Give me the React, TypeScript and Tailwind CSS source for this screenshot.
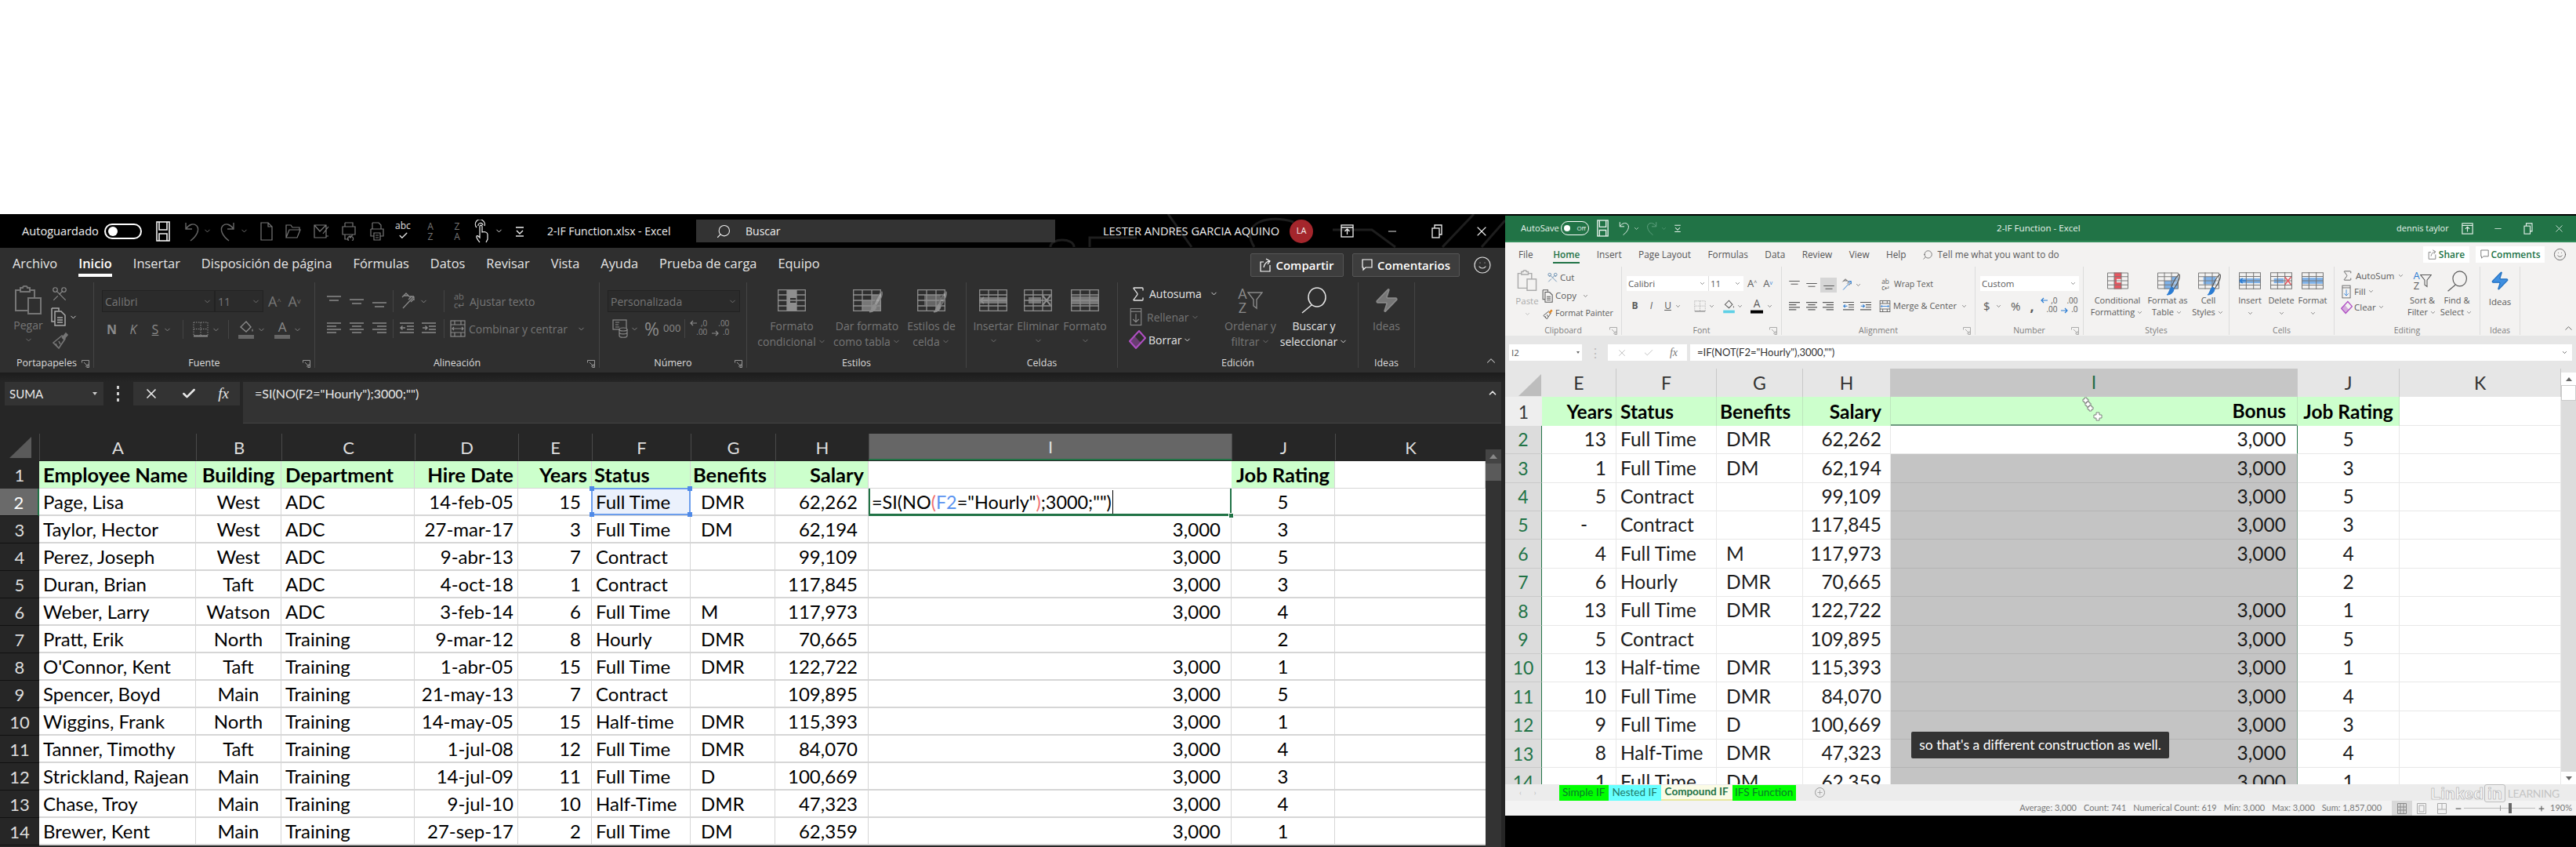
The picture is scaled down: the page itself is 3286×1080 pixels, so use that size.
import React from "react";
import { ChevronDown, ChevronUp, Scissors, Search, Smile, Sigma, Zap, X, Check, Minus, Plus } from "lucide-react";

type P = { className?: string };

const leftRows = [
  ["Page, Lisa", "West", "ADC", "14-feb-05", "15", "Full Time", "DMR", "62,262", "", "5"],
  ["Taylor, Hector", "West", "ADC", "27-mar-17", "3", "Full Time", "DM", "62,194", "3,000", "3"],
  ["Perez, Joseph", "West", "ADC", "9-abr-13", "7", "Contract", "", "99,109", "3,000", "5"],
  ["Duran, Brian", "Taft", "ADC", "4-oct-18", "1", "Contract", "", "117,845", "3,000", "3"],
  ["Weber, Larry", "Watson", "ADC", "3-feb-14", "6", "Full Time", "M", "117,973", "3,000", "4"],
  ["Pratt, Erik", "North", "Training", "9-mar-12", "8", "Hourly", "DMR", "70,665", "", "2"],
  ["O'Connor, Kent", "Taft", "Training", "1-abr-05", "15", "Full Time", "DMR", "122,722", "3,000", "1"],
  ["Spencer, Boyd", "Main", "Training", "21-may-13", "7", "Contract", "", "109,895", "3,000", "5"],
  ["Wiggins, Frank", "North", "Training", "14-may-05", "15", "Half-time", "DMR", "115,393", "3,000", "1"],
  ["Tanner, Timothy", "Taft", "Training", "1-jul-08", "12", "Full Time", "DMR", "84,070", "3,000", "4"],
  ["Strickland, Rajean", "Main", "Training", "14-jul-09", "11", "Full Time", "D", "100,669", "3,000", "3"],
  ["Chase, Troy", "Main", "Training", "9-jul-10", "10", "Half-Time", "DMR", "47,323", "3,000", "4"],
  ["Brewer, Kent", "Main", "Training", "27-sep-17", "2", "Full Time", "DM", "62,359", "3,000", "1"],
];

const rightRows = [
  ["13", "Full Time", "DMR", "62,262", "3,000", "5"],
  ["1", "Full Time", "DM", "62,194", "3,000", "3"],
  ["5", "Contract", "", "99,109", "3,000", "5"],
  ["-", "Contract", "", "117,845", "3,000", "3"],
  ["4", "Full Time", "M", "117,973", "3,000", "4"],
  ["6", "Hourly", "DMR", "70,665", "", "2"],
  ["13", "Full Time", "DMR", "122,722", "3,000", "1"],
  ["5", "Contract", "", "109,895", "3,000", "5"],
  ["13", "Half-time", "DMR", "115,393", "3,000", "1"],
  ["10", "Full Time", "DMR", "84,070", "3,000", "4"],
  ["9", "Full Time", "D", "100,669", "3,000", "3"],
  ["8", "Half-Time", "DMR", "47,323", "3,000", "4"],
  ["1", "Full Time", "DM", "62,359", "3,000", "1"],
];

// small drawn icons -----------------------------------------------------------

function VAlign({ pos, className }: P & { pos: number }) {
  const y = [2, 6, 10][pos];
  return (
    <svg width="18" height="16" viewBox="0 0 18 16" className={className} stroke="currentColor" strokeWidth="1.6">
      <path d={`M0 ${y}H18M3 ${y + 5}H15`} />
    </svg>
  );
}

function HAlign({ a, className }: P & { a: "l" | "c" | "r" }) {
  const short = a === "l" ? "M0 6H12M0 14H12" : a === "c" ? "M3 6H15M3 14H15" : "M6 6H18M6 14H18";
  return (
    <svg width="18" height="18" viewBox="0 0 18 18" className={className} stroke="currentColor" strokeWidth="1.6">
      <path d={`M0 2H18M0 10H18${short}`} />
    </svg>
  );
}

function Indent({ out, className, accent = "currentColor" }: P & { out?: boolean; accent?: string }) {
  return (
    <svg width="18" height="18" viewBox="0 0 18 18" className={className} stroke="currentColor" strokeWidth="1.4" fill="none">
      <path d="M0 2H18M9 6H18M9 10H18M0 14H18" />
      <path d={out ? "M7 8H1M3.5 5.5L1 8L3.5 10.5" : "M1 8H7M4.5 5.5L7 8L4.5 10.5"} stroke={accent} />
    </svg>
  );
}

function Orient({ className, accent = "currentColor" }: P & { accent?: string }) {
  return (
    <svg width="22" height="24" viewBox="0 0 22 24" className={className} stroke="currentColor" strokeWidth="1.3" fill="none">
      <path d="M2 7L7 2L12 7M4 5L10 5" />
      <path d="M10 10L14 6M13 13L17 9" />
      <path d="M3 21L17 6M17 6H12M17 6V11" stroke={accent} />
    </svg>
  );
}

function PasteIco({ className }: P) {
  return (
    <svg width="36" height="38" viewBox="0 0 36 38" className={className} stroke="currentColor" strokeWidth="2" fill="none">
      <path d="M8 6H2V32H18" />
      <path d="M8 3H11C11 0 17 0 17 3H20V8H8Z" />
      <path d="M20 6H26V16" />
      <rect x="18" y="16" width="16" height="20" />
    </svg>
  );
}

function CopyIco({ className }: P) {
  return (
    <svg width="20" height="24" viewBox="0 0 20 24" className={className} stroke="currentColor" strokeWidth="1.5" fill="none">
      <path d="M1 1H10V4M5 18H1V1" />
      <path d="M5 5H13L18 10V23H5Z" />
      <path d="M8 13H15M8 16H15M8 19H15" />
    </svg>
  );
}

function BrushIco({ className, tip = "currentColor" }: P & { tip?: string }) {
  return (
    <svg width="24" height="24" viewBox="0 0 24 24" className={className} stroke="currentColor" strokeWidth="1.6" fill="none">
      <path d="M14 6L18 10L10 22L3 15Z" />
      <path d="M14 9L19 3L21 5L16 11" fill={tip} stroke={tip} />
      <path d="M6 16L8 20M10 13L12 17" />
    </svg>
  );
}

function BorderIco({ className }: P) {
  return (
    <svg width="20" height="20" viewBox="0 0 20 20" className={className} stroke="currentColor" strokeWidth="1" fill="none">
      <path d="M1 1H19V18H1ZM10 1V18M1 9.5H19" strokeDasharray="1.5 1.5" />
      <path d="M1 18.5H19" strokeWidth="2" />
    </svg>
  );
}

function FillIco({ className, bar }: P & { bar: string }) {
  return (
    <svg width="20" height="26" viewBox="0 0 20 26" className={className} fill="none">
      <path d="M3 10L10 3L16 10L10 16Z" stroke="currentColor" strokeWidth="1.4" />
      <path d="M18 12C19 14 19 15 18 16C17 15 17 14 18 12Z" fill="currentColor" />
      <rect x="0" y="20" width="20" height="5" fill={bar} />
    </svg>
  );
}

function FontColorIco({ bar, className }: P & { bar: string }) {
  return (
    <span className={`flex w-5 flex-col items-center leading-none ${className ?? ""}`}>
      <span className="font-['Open_Sans',sans-serif] text-[17px] leading-[18px]">A</span>
      <span className="mt-[1px] block h-[5px] w-5" style={{ backgroundColor: bar }} />
    </span>
  );
}

function AB({ className }: P) {
  return (
    <span className={`relative block h-[24px] w-[17px] font-['Open_Sans',sans-serif] text-[11px] leading-[11px] ${className ?? ""}`}>
      ab
      <span className="block">c↵</span>
    </span>
  );
}

function MergeIco({ className, accent = "currentColor" }: P & { accent?: string }) {
  return (
    <svg width="20" height="24" viewBox="0 0 20 24" className={className} stroke="currentColor" strokeWidth="1.2" fill="none">
      <rect x="1" y="2" width="18" height="20" />
      <path d="M1 7H19M1 17H19M6 2V7M14 2V7M6 17V22M14 17V22" />
      <path d="M3 12H17M5 10L3 12L5 14M15 10L17 12L15 14" stroke={accent} />
    </svg>
  );
}

function Accounting({ className }: P) {
  return (
    <svg width="20" height="24" viewBox="0 0 20 24" className={className} stroke="currentColor" strokeWidth="1.2" fill="none">
      <rect x="1" y="1" width="17" height="12" />
      <path d="M4 4H9M4 7H8M4 10H9" />
      <ellipse cx="14" cy="13" rx="5" ry="2" fill="#2f2f2f" />
      <path d="M9 13V21C9 24 19 24 19 21V13M9 17C9 19.5 19 19.5 19 17" />
    </svg>
  );
}

function DecPlaces({ up, className, accent = "currentColor" }: P & { up?: boolean; accent?: string }) {
  return (
    <span className={`relative block h-[24px] w-[22px] text-right font-['Open_Sans',sans-serif] text-[10px] leading-[11px] ${className ?? ""}`}>
      <span className="block">{up ? ",0" : ".00"}</span>
      <span className="block">{up ? ".00" : ".0"}</span>
      <svg width="9" height="8" viewBox="0 0 9 8" stroke={accent} fill="none" strokeWidth="1.2" className={`absolute left-0 ${up ? "top-[1px]" : "top-[14px]"}`}>
        <path d={up ? "M9 4H1M4 1L1 4L4 7" : "M0 4H8M5 1L8 4L5 7"} />
      </svg>
    </span>
  );
}

// big ribbon table glyphs: a grid with some cells filled
function TableIco({ fill, mark, w = 36, h = 28, className, kind }: P & { fill: string; mark?: string; w?: number; h?: number; kind: string }) {
  return (
    <svg width={w} height={h} viewBox="0 0 36 28" className={className} fill="none">
      {kind === "cond" && <path d="M12 0H24V11H16V17H24V28H12Z" fill={fill} />}
      {kind === "tbl" && <path d="M12 14H24V28H12Z M24 7H36V28H24Z" fill={fill} />}
      {kind === "cell" && <path d="M9 7H30V20H9Z" fill={fill} />}
      {kind === "ins" && <path d="M1 10H36V18H1Z" fill={fill} />}
      {kind === "del" && <path d="M6 10H22V18H6Z" fill={fill} />}
      {kind === "fmt" && <path d="M0 9H36V19H0Z" fill={fill} />}
      <path d="M.7 .7H35.3V27.3H.7ZM12 0V28M24 0V28M0 7H36M0 14H36M0 21H36" stroke="currentColor" strokeWidth="1.3" />
      {mark && kind === "ins" && <path d="M12 14H2M6 10L2 14L6 18" stroke={mark} strokeWidth="2" />}
      {mark && kind === "del" && <path d="M24 8L34 20M34 8L24 20" stroke={mark} strokeWidth="2" />}
    </svg>
  );
}

function BrushOver({ children, color }: { children: React.ReactNode; color: string }) {
  return (
    <span className="relative block">
      {children}
      <svg width="22" height="30" viewBox="0 0 22 30" className="absolute -right-[5px] top-[2px]" fill="none">
        <path d="M18 1C20 4 15 14 11 19L8 17C10 11 15 2 18 1Z" fill="#fff" fillOpacity="0.25" stroke="currentColor" strokeWidth="1.2" />
        <path d="M8 17L11 19C11 24 7 27 2 27C5 25 5 20 8 17Z" fill={color} stroke={color} />
      </svg>
    </span>
  );
}

function Eraser({ className, color }: P & { color: string }) {
  return (
    <svg width="22" height="24" viewBox="0 0 22 24" className={className} fill="none">
      <path d="M13 1L21 10L9 23L1 14Z" stroke={color} strokeWidth="2" />
      <path d="M1 14L7 7L15 16L9 23Z" fill={color} fillOpacity="0.45" />
    </svg>
  );
}

function FillDown({ className, accent = "currentColor" }: P & { accent?: string }) {
  return (
    <svg width="20" height="32" viewBox="0 0 20 32" className={className} fill="none" stroke="currentColor" strokeWidth="1.5">
      <rect x="1" y="2" width="18" height="28" />
      <path d="M1 7H19" />
      <path d="M10 11V25M5 20L10 25L15 20" stroke={accent} />
    </svg>
  );
}

function Magnifier({ className, s = 34 }: P & { s?: number }) {
  return (
    <svg width={s} height={s} viewBox="0 0 34 34" className={className} stroke="currentColor" strokeWidth="1.5" fill="none">
      <ellipse cx="21" cy="13" rx="11" ry="12" />
      <path d="M14 23L2 33" />
    </svg>
  );
}

function SortIco({ s, className, accent = "currentColor", big }: P & { s: string; accent?: string; big?: boolean }) {
  return (
    <span className={`flex items-center ${className ?? ""}`}>
      <span className={`flex flex-col items-center font-['Open_Sans',sans-serif] ${big ? "text-[18px] leading-[18px]" : "text-[13px] leading-[13px]"}`}>
        <span style={{ color: accent }}>A</span>
        <span>Z</span>
      </span>
      <svg width="20" height="24" viewBox="0 0 20 24" stroke="currentColor" strokeWidth="1.4" fill="none" className={s}>
        <path d="M1 2H19L12 11V22L8 19V11Z" />
      </svg>
    </span>
  );
}

function Chev({ className }: P) {
  return <ChevronDown size={11} strokeWidth={2} className={className} />;
}

function Launcher({ className }: P) {
  return (
    <svg width="10" height="10" viewBox="0 0 10 10" className={className} stroke="currentColor" fill="none">
      <path d="M.5 3.5V.5H9.5V9.5H6.5M3 3L8 8M8 5V8H5" />
    </svg>
  );
}

function Kebab() {
  return (
    <span className="flex flex-col gap-[4px]">
      <span className="block h-[4px] w-[3px] bg-[#cfcfcf]" />
      <span className="block h-[4px] w-[3px] bg-[#cfcfcf]" />
      <span className="block h-[4px] w-[3px] bg-[#cfcfcf]" />
    </span>
  );
}

function ShareIco({ className }: P) {
  return (
    <svg width="14" height="18" viewBox="0 0 14 18" className={className} stroke="currentColor" strokeWidth="1.2" fill="none">
      <path d="M5 5H1V17H13V9M5 12C6 7 8 5 12 4M8 1L13 4L10 8" />
    </svg>
  );
}

function CommentIco({ className }: P) {
  return (
    <svg width="14" height="16" viewBox="0 0 14 16" className={className} stroke="currentColor" strokeWidth="1.2" fill="none">
      <path d="M1 1H13V11H5L2 14V11H1Z" />
    </svg>
  );
}

function RibbonDisplay({ className }: P) {
  return (
    <svg width="17" height="17" viewBox="0 0 17 17" className={className} stroke="currentColor" strokeWidth="1.3" fill="none">
      <rect x="1" y="1" width="15" height="15" />
      <path d="M1 4H16M8.5 13V6M5.5 9L8.5 6L11.5 9" />
    </svg>
  );
}

function RestoreIco({ className }: P) {
  return (
    <svg width="14" height="18" viewBox="0 0 14 18" className={className} stroke="currentColor" strokeWidth="1.3" fill="none">
      <rect x="1" y="5" width="9" height="12" />
      <path d="M4 5V1H13V13H10" />
    </svg>
  );
}

function SaveIco({ className, w = 18, h = 26 }: P & { w?: number; h?: number }) {
  return (
    <svg width={w} height={h} viewBox="0 0 18 26" className={className} stroke="currentColor" strokeWidth="1.6" fill="none">
      <rect x="1" y="1" width="16" height="24" />
      <path d="M4 1V11H14V1M4 25V16H14V25" />
    </svg>
  );
}

function UndoIco({ className }: P) {
  return (
    <svg width="20" height="28" viewBox="0 0 20 28" className={className} stroke="currentColor" strokeWidth="1.4" fill="none">
      <path d="M2 3V11H10M2 11C6 5 12 3 16 7C20 12 16 20 8 26" />
    </svg>
  );
}

function RedoIco({ className }: P) {
  return (
    <svg width="20" height="28" viewBox="0 0 20 28" className={className} stroke="currentColor" strokeWidth="1.4" fill="none">
      <path d="M18 3V11H10M18 11C14 5 8 3 4 7C0 12 4 20 12 26" />
    </svg>
  );
}

function DocIco({ kind, className }: P & { kind: string }) {
  return (
    <svg width="20" height="24" viewBox="0 0 20 24" className={className} stroke="currentColor" strokeWidth="1.2" fill="none">
      {kind === "new" && <path d="M3 1H12L17 6V23H3ZM12 1V6H17" />}
      {kind === "open" && <path d="M1 20V4H7L9 7H18V10M1 20L5 10H19L15 20Z" />}
      {kind === "mail" && <path d="M1 4H16V20H1ZM1 4L8 12L16 4M12 15L19 6M16 18L19 18" />}
      {kind === "prev" && <path d="M5 1H15V6M5 6V1M2 6H18V16H2ZM5 16V22H10M12 18A3.5 3.5 0 1 0 12.1 18ZM10 18L12 20L15 16" />}
      {kind === "print" && <path d="M4 1H12L15 4V9M4 9V1M2 9H18V18H14M6 18H2V9M6 14H14V23H6ZM8 17H12M8 20H12" />}
    </svg>
  );
}

function TouchIco({ className }: P) {
  return (
    <svg width="20" height="30" viewBox="0 0 20 30" className={className} stroke="currentColor" strokeWidth="1.2" fill="none">
      <path d="M4 10A6 6 0 1 1 14 8M6 8A3 3 0 1 1 12 7" />
      <path d="M8 29C5 25 3 23 4 21C5 20 6 21 8 23V9C8 6.5 11 6.5 11 9V16C14 15 18 16 18 19V25L16 29" />
    </svg>
  );
}

function Customize({ className }: P) {
  return (
    <svg width="12" height="14" viewBox="0 0 12 14" className={className} stroke="currentColor" fill="none" strokeWidth="1.4">
      <path d="M1 2H11M2 6L6 10L10 6" />
      <path d="M1 13H11" />
    </svg>
  );
}

// ribbon structure --------------------------------------------------------------

function Group({ className, label, launcher, labelClass, children }: { className: string; label: string; launcher?: boolean; labelClass: string; children: React.ReactNode }) {
  return (
    <div className={`flex shrink-0 flex-col ${className}`}>
      <div className="min-h-0 flex-1">{children}</div>
      <div className={`relative text-center ${labelClass}`}>
        {label}
        {launcher && <Launcher className="absolute bottom-[0px] right-[5px] opacity-60" />}
      </div>
    </div>
  );
}

function DarkBig({ lines, icon, className, dim = true }: { lines: string[]; icon: React.ReactNode; className: string; dim?: boolean }) {
  return (
    <div className={`flex flex-col items-center ${dim ? "text-[#767676]" : "text-[#e6e6e6]"} ${className}`}>
      <div className="flex h-[45px] items-center">{icon}</div>
      {lines.map((l) => (
        <div key={l} className="flex h-[20px] items-center whitespace-nowrap text-[14px]">
          {l.replace("~", "")}
          {l.includes("~") && <Chev className="ml-[2px]" />}
        </div>
      ))}
      {lines.length === 1 && <Chev className="mt-[4px]" />}
    </div>
  );
}

function LightBig({ lines, icon, className, dim }: { lines: string[]; icon: React.ReactNode; className: string; dim?: boolean }) {
  return (
    <div className={`flex flex-col items-center ${dim ? "text-[#9a9a9a]" : "text-[#5a5a5a]"} ${className}`}>
      <div className="flex h-[36px] items-center">{icon}</div>
      {lines.map((l) => (
        <div key={l} className="flex h-[15px] items-center whitespace-nowrap text-[11px]">
          {l.replace("~", "")}
          {l.includes("~") && <Chev className="ml-[1px] scale-75" />}
        </div>
      ))}
      {lines.length === 1 && <Chev className="mt-[3px] scale-75" />}
    </div>
  );
}

// left window -------------------------------------------------------------------

function LeftTitle() {
  return (
    <div className="relative flex h-[43px] shrink-0 items-center overflow-hidden bg-black pl-[28px] text-[14.6px] text-[#f0f0f0]">
      <svg width="640" height="43" viewBox="0 0 640 43" className="absolute right-0 top-0" fill="none" stroke="#1e1e1e" strokeWidth="3">
        <path d="M0 20H60M60 42C60 30 90 30 90 42M110 42V30H170M240 42L210 0M320 42C300 10 340 0 370 10M420 20H470L500 42M560 42L600 0M610 42L640 8" />
      </svg>
      <span className="relative w-[105px]">Autoguardado</span>
      <span className="relative flex h-[20px] w-[48px] items-center rounded-full border-2 border-white pl-[3px]">
        <span className="block h-[12px] w-[12px] rounded-full bg-white" />
      </span>
      <SaveIco w={18} h={26} className="relative ml-[18px]" />
      <UndoIco className="relative ml-[18px] text-[#666]" />
      <Chev className="relative ml-[4px] text-[#777]" />
      <RedoIco className="relative ml-[10px] text-[#666]" />
      <Chev className="relative ml-[6px] text-[#777]" />
      <DocIco kind="new" className="relative ml-[13px] text-[#777]" />
      <DocIco kind="open" className="relative ml-[14px] text-[#777]" />
      <DocIco kind="mail" className="relative ml-[16px] text-[#777]" />
      <DocIco kind="prev" className="relative ml-[15px] text-[#777]" />
      <DocIco kind="print" className="relative ml-[16px] text-[#777]" />
      <span className="relative ml-[13px] flex w-[20px] flex-col items-center text-[12px] leading-[12px] text-[#e0e0e0]">
        abc
        <Check size={13} strokeWidth={2.5} />
      </span>
      <span className="relative ml-[15px] w-[20px] text-center text-[12px] leading-[13px] text-[#777]">A<br />Z</span>
      <span className="relative ml-[14px] w-[20px] text-center text-[12px] leading-[13px] text-[#777]">Z<br />A</span>
      <TouchIco className="relative ml-[11px]" />
      <Chev className="relative ml-[7px]" />
      <Customize className="relative ml-[15px]" />
      <span className="relative ml-[29px] w-[190px] whitespace-nowrap text-[14px]">2-IF Function.xlsx  -  Excel</span>
      <div className="relative flex h-[29px] w-[458px] items-center bg-[#333] pl-[25px]">
        <Search size={20} strokeWidth={1.3} className="-scale-x-100" />
        <span className="ml-[18px] text-[14px]">Buscar</span>
      </div>
      <span className="relative ml-[61px] w-[226px] whitespace-nowrap text-[14.6px]">LESTER ANDRES GARCIA AQUINO</span>
      <span className="relative ml-[12px] flex h-[30px] w-[30px] items-center justify-center rounded-full bg-[#a4262c] text-[11px]">LA</span>
      <RibbonDisplay className="relative ml-[35px]" />
      <Minus size={16} strokeWidth={1.4} className="relative ml-[41px]" />
      <RestoreIco className="relative ml-[42px]" />
      <X size={20} strokeWidth={1.3} className="relative ml-[40px]" />
    </div>
  );
}

const leftTabs = ["Archivo", "Inicio", "Insertar", "Disposición de página", "Fórmulas", "Datos", "Revisar", "Vista", "Ayuda", "Prueba de carga", "Equipo"];

function LeftRibbon() {
  const lab = "h-[11px] leading-[10px] text-[12.5px] text-[#dcdcdc]";
  const bd = "border-r border-[#444]";
  return (
    <div className="flex h-[159px] shrink-0 flex-col bg-[#2f2f2f] text-[#767676]">
      <div className="flex h-[44px] shrink-0 items-center">
        <div className="flex -translate-y-[2px] items-center gap-[27px] pl-[16px] text-[16.4px] text-[#e6e6e6]">
          {leftTabs.map((t) => (
            <span key={t} className={`relative whitespace-nowrap ${t === "Inicio" ? "font-semibold text-white" : ""}`}>
              {t}
              {t === "Inicio" && <span className="absolute -bottom-[5px] left-0 right-0 block h-[4px] bg-white" />}
            </span>
          ))}
        </div>
        <button className="ml-auto flex h-[30px] w-[119px] items-center justify-center gap-[6px] rounded-[2px] border border-[#555] bg-[#3d3d3d] text-[15px] font-semibold text-white">
          <ShareIco /> Compartir
        </button>
        <button className="ml-[11px] flex h-[30px] w-[137px] items-center justify-center gap-[6px] rounded-[2px] border border-[#555] bg-[#3d3d3d] text-[15px] font-semibold text-white">
          <CommentIco /> Comentarios
        </button>
        <Smile size={24} strokeWidth={1.2} className="ml-[17px] mr-[17px] text-[#e0e0e0]" />
      </div>
      <div className="flex h-[109px] shrink-0">
        <Group className={`w-[120px] ${bd}`} label="Portapapeles" launcher labelClass={lab}>
          <div className="flex pl-[17px] pt-[4px]">
            <div className="flex w-[38px] flex-col items-center">
              <PasteIco />
              <span className="mt-[2px] text-[14px]">Pegar</span>
              <Chev className="mt-[3px]" />
            </div>
            <div className="ml-[9px] flex flex-col gap-[6px] pl-[1px]">
              <Scissors size={22} strokeWidth={1.3} className="rotate-90 text-[#8a8a8a]" />
              <span className="flex items-center gap-[3px] text-[#aaa]"><CopyIco /><Chev className="text-[#ddd]" /></span>
              <BrushIco />
            </div>
          </div>
        </Group>
        <Group className={`w-[282px] ${bd}`} label="Fuente" launcher labelClass={lab}>
          <div className="flex items-center pl-[10px] pt-[10px]">
            <div className="flex h-[28px] w-[144px] items-center justify-between border border-[#222] bg-[#2b2b2b] px-[3px] text-[14px]">Calibri<Chev /></div>
            <div className="flex h-[28px] w-[62px] items-center justify-between border border-[#222] bg-[#2b2b2b] px-[3px] text-[14px]">11<Chev /></div>
            <span className="ml-[6px] text-[18px] leading-none">A<sup className="text-[9px]">^</sup></span>
            <span className="ml-[9px] text-[18px] leading-none">A<sup className="text-[9px]">v</sup></span>
          </div>
          <div className="flex items-center pl-[16px] pt-[9px] text-[#8a8a8a]">
            <span className="w-[12px] text-center text-[16px] font-bold">N</span>
            <span className="ml-[16px] w-[12px] text-center text-[16px] italic">K</span>
            <span className="ml-[16px] w-[12px] text-center text-[16px] underline">S</span>
            <Chev className="ml-[4px]" />
            <span className="ml-[14px] mr-[12px] block h-[24px] w-px bg-[#444]" />
            <BorderIco />
            <Chev className="ml-[4px]" />
            <span className="ml-[10px] mr-[12px] block h-[24px] w-px bg-[#444]" />
            <FillIco bar="#666" />
            <Chev className="ml-[4px]" />
            <FontColorIco bar="#666" className="ml-[11px]" />
            <Chev className="ml-[4px]" />
          </div>
        </Group>
        <Group className={`w-[363px] ${bd}`} label="Alineación" launcher labelClass={lab}>
          <div className="flex items-start pl-[15px] pt-[10px] text-[#8a8a8a]">
            <div className="flex h-[28px] items-center gap-[11px]">
              <VAlign pos={0} /><VAlign pos={1} /><VAlign pos={2} />
            </div>
            <span className="mx-[8px] block h-[28px] w-px bg-[#444]" />
            <Orient className="ml-[1px] mt-[2px]" />
            <Chev className="ml-[2px] mt-[9px]" />
            <span className="ml-[20px] mr-[12px] block h-[28px] w-px bg-[#444]" />
            <div className="flex h-[28px] items-center gap-[3px] text-[14px] text-[#767676]"><AB />Ajustar texto</div>
          </div>
          <div className="flex items-center pl-[15px] pt-[9px] text-[#8a8a8a]">
            <div className="flex items-center gap-[11px]">
              <HAlign a="l" /><HAlign a="c" /><HAlign a="r" />
            </div>
            <span className="mx-[8px] block h-[24px] w-px bg-[#444]" />
            <div className="flex items-center gap-[10px]"><Indent out /><Indent /></div>
            <span className="ml-[10px] mr-[7px] block h-[24px] w-px bg-[#444]" />
            <MergeIco />
            <span className="ml-[4px] whitespace-nowrap text-[14px] text-[#767676]">Combinar y centrar</span>
            <Chev className="ml-[12px]" />
          </div>
        </Group>
        <Group className={`w-[188px] ${bd}`} label="Número" launcher labelClass={lab}>
          <div className="pl-[10px] pt-[10px]">
            <div className="flex h-[28px] w-[169px] items-center justify-between border border-[#222] bg-[#2b2b2b] px-[3px] text-[14px]">Personalizada<Chev /></div>
          </div>
          <div className="flex items-center pl-[16px] pt-[9px] text-[#8a8a8a]">
            <Accounting />
            <Chev className="ml-[3px]" />
            <span className="ml-[7px] text-[23px] leading-none">%</span>
            <span className="ml-[5px] text-[13px]">000</span>
            <span className="ml-[5px] mr-[6px] block h-[24px] w-px bg-[#444]" />
            <DecPlaces up />
            <DecPlaces className="ml-[6px]" />
          </div>
        </Group>
        <Group className={`w-[280px] ${bd}`} label="Estilos" labelClass={lab}>
          <div className="flex pl-[5px]">
            <DarkBig className="w-[104px]" lines={["Formato", "condicional~"]} icon={<TableIco kind="cond" fill="#8e8e8e" className="text-[#8e8e8e]" />} />
            <DarkBig className="w-[88px]" lines={["Dar formato", "como tabla~"]} icon={<BrushOver color="#8e8e8e"><TableIco kind="tbl" fill="#777" className="text-[#8e8e8e]" /></BrushOver>} />
            <DarkBig className="w-[76px]" lines={["Estilos de", "celda~"]} icon={<BrushOver color="#8e8e8e"><TableIco kind="cell" fill="#666" className="text-[#8e8e8e]" /></BrushOver>} />
          </div>
        </Group>
        <Group className={`w-[193px] ${bd}`} label="Celdas" labelClass={lab}>
          <div className="flex pl-[6px]">
            <DarkBig className="w-[56px]" lines={["Insertar"]} icon={<TableIco kind="ins" fill="#777" mark="#8e8e8e" className="text-[#8e8e8e]" />} />
            <DarkBig className="w-[58px]" lines={["Eliminar"]} icon={<TableIco kind="del" fill="#777" mark="#8e8e8e" className="text-[#8e8e8e]" />} />
            <DarkBig className="w-[62px]" lines={["Formato"]} icon={<TableIco kind="fmt" fill="#777" className="text-[#8e8e8e]" />} />
          </div>
        </Group>
        <Group className={`w-[307px] ${bd}`} label="Edición" labelClass={lab}>
          <div className="flex">
            <div className="w-[135px] pl-[14px] pt-[1px] text-[14px]">
              <div className="flex h-[27px] items-center text-[#e6e6e6]">
                <Sigma size={24} strokeWidth={1.3} />
                <span className="ml-[2px]">Autosuma</span>
                <Chev className="ml-[10px]" />
              </div>
              <div className="mt-[2px] flex h-[28px] items-center">
                <FillDown className="h-[24px] w-[18px] text-[#8a8a8a]" />
                <span className="ml-[5px]">Rellenar</span>
                <Chev className="ml-[2px]" />
              </div>
              <div className="mt-[1px] flex h-[28px] items-center text-[#e6e6e6]">
                <Eraser color="#b04fc4" />
                <span className="ml-[3px]">Borrar</span>
                <Chev className="ml-[2px]" />
              </div>
            </div>
            <DarkBig className="w-[68px]" lines={["Ordenar y", "filtrar~"]} icon={<SortIco s="" big className="text-[#8a8a8a]" />} />
            <DarkBig className="ml-[3px] w-[88px]" dim={false} lines={["Buscar y", "seleccionar~"]} icon={<Magnifier />} />
          </div>
        </Group>
        <Group className={`w-[72px] ${bd}`} label="Ideas" labelClass={lab}>
          <div className="flex flex-col items-center text-[#767676]">
            <div className="flex h-[45px] items-center"><Zap size={34} strokeWidth={1.2} className="fill-[#767676] text-[#8a8a8a]" /></div>
            <span className="text-[14px]">Ideas</span>
          </div>
        </Group>
        <div className="flex flex-1 items-end justify-end pb-[0px] pr-[9px] text-[#ccc]">
          <ChevronUp size={18} strokeWidth={1.4} />
        </div>
      </div>
    </div>
  );
}

function LeftFormula() {
  return (
    <div className="flex h-[53px] shrink-0 pl-[6px] pr-[5px] text-[#e8e8e8]">
      <div className="flex h-[30px] w-[126px] items-center justify-between bg-[#333] pl-[6px] pr-[8px] font-['Lato',sans-serif] text-[15px]">
        SUMA
        <span className="border-x-[3px] border-t-[4px] border-x-transparent border-t-[#ccc]" />
      </div>
      <div className="flex h-[30px] w-[38px] items-center justify-center pr-[2px]"><Kebab /></div>
      <div className="flex h-[30px] w-[136px] items-center justify-between bg-[#333] pl-[13px] pr-[14px]">
        <X size={20} strokeWidth={2} />
        <Check size={20} strokeWidth={3} />
        <span className="font-['Liberation_Serif',serif] text-[19px] italic">fx</span>
      </div>
      <div className="ml-[4px] flex flex-1 items-start justify-between border-b border-[#444] bg-[#333] pl-[15px] pr-[4px] pt-[3px]">
        <span className="font-['Lato',sans-serif] text-[16px] leading-[24px]">=SI(NO(F2="Hourly");3000;"")</span>
        <ChevronUp size={14} strokeWidth={3} className="mt-[4px]" />
      </div>
    </div>
  );
}

const leftCols = "grid-cols-[50px_200px_109px_170px_132px_94px_126px_108px_119px_463px_132px_192px]";
const leftStyle = ["pl-[5px] justify-start", "justify-center", "pl-[5px] justify-start", "pr-[5px] justify-end", "pr-[13px] justify-end", "pl-[5px] justify-start", "pl-[13px] justify-start", "pr-[13px] justify-end", "pr-[13px] justify-end", "justify-center"];

function LeftSheet() {
  const head = ["A", "B", "C", "D", "E", "F", "G", "H", "I", "J", "K"];
  const cell = "flex items-center border-b-2 border-r border-[#d6d6d6] whitespace-nowrap overflow-visible";
  return (
    <div className="mt-[13px] flex min-h-0 flex-1 font-['Lato',sans-serif] text-[24px] text-black">
      <div className={`grid h-fit w-[1895px] shrink-0 auto-rows-[35px] ${leftCols}`}>
        <div className="flex h-[34px] items-end justify-center bg-[#262626] pb-[3px] pl-[2px]">
          <span className="block h-0 w-0 border-b-[27px] border-l-[28px] border-b-[#5a5a5a] border-l-transparent" />
        </div>
        {head.map((h) => (
          <div key={h} className={`flex h-[34px] items-center justify-center border-l border-[#4a4a4a] text-[22px] text-[#dedede] ${h === "I" ? "border-b-2 border-b-[#217346] bg-[#666]" : "bg-[#262626]"}`}>{h}</div>
        ))}

        <div className="flex h-[36px] items-center justify-center border-b border-[#111] bg-[#262626] text-[22px] text-[#dedede]">1</div>
        {["Employee Name", "Building", "Department", "Hire Date", "Years", "Status", "Benefits", "Salary", "", "Job Rating", ""].map((t, i) => (
          <div
            key={i}
            className={`h-[36px] ${cell} text-[25.5px] font-bold ${
              i === 8 ? "border-b-0 border-r-0 bg-white" : i === 10 ? "bg-white" : "border-[#b8e6b8] bg-[#ccffcc]"
            } ${i === 0 ? "pl-[5px]" : i === 1 ? "justify-center" : i === 2 ? "pl-[5px]" : i === 3 || i === 4 || i === 7 ? "justify-end pr-[5px]" : i === 5 || i === 6 ? "pl-[3px]" : "justify-center"}`}
          >
            {t}
          </div>
        ))}

        {leftRows.map((r, ri) => (
          <React.Fragment key={ri}>
            <div className={`flex items-center justify-center border-b border-[#111] text-[22px] ${ri === 0 ? "border-r-2 border-r-[#217346] bg-[#6a6a6a] text-white" : "bg-[#262626] text-[#dedede]"}`}>{ri + 2}</div>
            {r.map((v, i) => {
              if (ri === 0 && i === 5) {
                return (
                  <div key={i} className={`relative bg-[#ebf1fc] ${cell} ${leftStyle[i]}`}>
                    {v}
                    <span className="pointer-events-none absolute -inset-[1px] border-[2px] border-[#6c9eec]" />
                    <span className="absolute -left-[3px] -top-[3px] block h-[6px] w-[6px] bg-[#4f8ae8]" />
                    <span className="absolute -right-[3px] -top-[3px] block h-[6px] w-[6px] bg-[#4f8ae8]" />
                    <span className="absolute -bottom-[3px] -left-[3px] block h-[6px] w-[6px] bg-[#4f8ae8]" />
                    <span className="absolute -bottom-[3px] -right-[3px] block h-[6px] w-[6px] bg-[#4f8ae8]" />
                  </div>
                );
              }
              if (ri === 0 && i === 8) {
                return (
                  <div key={i} className="relative flex items-center justify-start whitespace-nowrap bg-white pl-[4px] text-[23.4px]">
                    <span className="pointer-events-none absolute bottom-0 left-0 right-0 top-0 border-x-2 border-b-[3px] border-[#217346]" />
                    <span className="absolute -bottom-[3px] -right-[3px] block h-[7px] w-[7px] border border-white bg-[#217346]" />
                    =SI(NO<span className="text-[#f07070]">(</span><span className="text-[#5b93f0]">F2</span>="Hourly"<span className="text-[#f07070]">)</span>;3000;"")
                    <span className="ml-[1px] block h-[32px] w-px bg-black" />
                  </div>
                );
              }
              return <div key={i} className={`bg-white ${cell} ${leftStyle[i]}`}>{v}</div>;
            })}
            <div className="border-b-2 border-[#d6d6d6] bg-white" />
          </React.Fragment>
        ))}
      </div>
      <div className="flex flex-1 flex-col pr-[5px]">
        <div className="h-[20px] shrink-0" />
        <div className="flex h-[18px] shrink-0 items-center justify-center bg-[#444]">
          <span className="border-x-[5px] border-b-[6px] border-x-transparent border-b-[#888]" />
        </div>
        <div className="h-[22px] shrink-0 bg-[#5a5a5a]" />
        <div className="flex-1 bg-[#333]" />
      </div>
    </div>
  );
}

function LeftWindow() {
  return (
    <div className="flex h-[807px] w-[1920px] shrink-0 flex-col overflow-hidden bg-[#262626]">
      <LeftTitle />
      <LeftRibbon />
      <div className="h-[12px] shrink-0 bg-gradient-to-b from-[#1c1c1c] to-[#262626]" />
      <LeftFormula />
      <LeftSheet />
    </div>
  );
}

// right window ------------------------------------------------------------------

function RightTitle() {
  return (
    <div className="flex h-[34px] shrink-0 items-center border-b-2 border-[#2f8a58] bg-[#217346] pl-[20px] text-[11.2px] text-[#e8f2ec]">
      <span className="w-[51px]">AutoSave</span>
      <span className="flex h-[18px] w-[36px] items-center justify-between rounded-full border border-white pl-[3px] pr-[3px] text-[8px]">
        <span className="block h-[8px] w-[8px] rounded-full bg-white" />Off
      </span>
      <SaveIco w={15} h={22} className="ml-[10px]" />
      <UndoIco className="ml-[12px] h-[20px] w-[16px]" />
      <Chev className="ml-[2px] scale-75" />
      <RedoIco className="ml-[6px] h-[20px] w-[16px] text-[#5fa07f]" />
      <Chev className="ml-[2px] scale-75 text-[#5fa07f]" />
      <Customize className="ml-[6px] scale-75" />
      <span className="ml-[401px] w-[510px] whitespace-nowrap text-[11.6px]">2-IF Function  -  Excel</span>
      <span className="w-[64px] whitespace-nowrap text-[11px]">dennis taylor</span>
      <RibbonDisplay className="ml-[19px] h-[15px] w-[15px]" />
      <Minus size={13} strokeWidth={1.4} className="ml-[25px]" />
      <RestoreIco className="ml-[26px] h-[15px] w-[12px]" />
      <X size={15} strokeWidth={1.3} className="ml-[26px]" />
    </div>
  );
}

const rightTabs = ["File", "Home", "Insert", "Page Layout", "Formulas", "Data", "Review", "View", "Help"];

function RightRibbon() {
  const lab = "h-[10px] leading-[8px] text-[10.5px] text-[#7c7c7c]";
  const bd = "border-r border-[#dcdcdc]";
  return (
    <div className="flex h-[119px] shrink-0 flex-col bg-[#f3f2f1] text-[#5a5a5a]">
      <div className="flex h-[31px] shrink-0 items-center text-[11.8px]">
        <div className="flex items-center gap-[21.5px] pl-[17px] text-[#555]">
          {rightTabs.map((t) => (
            <span key={t} className={`relative whitespace-nowrap ${t === "File" ? "mr-[4px]" : ""} ${t === "Home" ? "font-semibold text-[#217346]" : ""}`}>
              {t}
              {t === "Home" && <span className="absolute -bottom-[3px] left-0 right-0 block h-[2px] bg-[#217346]" />}
            </span>
          ))}
        </div>
        <Search size={14} strokeWidth={1.3} className="ml-[20px] -scale-x-100" />
        <span className="ml-[6px] whitespace-nowrap">Tell me what you want to do</span>
        <button className="ml-auto flex h-[21px] w-[59px] items-center justify-center gap-[3px] bg-white text-[12px] font-semibold text-[#217346]">
          <ShareIco className="h-[13px] w-[11px] text-[#777]" />Share
        </button>
        <button className="ml-[8px] flex h-[21px] w-[88px] items-center justify-center gap-[3px] bg-white text-[12px] font-semibold text-[#217346]">
          <CommentIco className="h-[13px] w-[11px] text-[#777]" />Comments
        </button>
        <Smile size={17} strokeWidth={1.2} className="ml-[11px] mr-[12px] text-[#555]" />
      </div>
      <div className="flex h-[87px] shrink-0">
        <Group className={`w-[149px] ${bd}`} label="Clipboard" launcher labelClass={lab}>
          <div className="flex pl-[15px] pt-[4px] text-[11.5px]">
            <div className="flex w-[26px] flex-col items-center text-[#aaa]">
              <PasteIco className="h-[28px] w-[26px]" />
              <span className="mt-[3px]">Paste</span>
              <Chev className="mt-[3px] scale-75" />
            </div>
            <div className="ml-[6px] flex flex-col gap-[3px]">
              <div className="flex h-[20px] items-center"><Scissors size={16} strokeWidth={1.3} className="ml-[6px] w-[15px] rotate-90 text-[#5580a8]" /><span className="ml-[2px]">Cut</span></div>
              <div className="flex h-[20px] items-center"><CopyIco className="h-[17px] w-[15px]" /><span className="ml-[2px]">Copy</span><Chev className="ml-[6px] scale-75" /></div>
              <div className="flex h-[20px] items-center"><BrushIco tip="#e08a2c" className="h-[17px] w-[15px]" /><span className="ml-[2px] whitespace-nowrap text-[10.6px]">Format Painter</span></div>
            </div>
          </div>
        </Group>
        <Group className={`w-[204px] ${bd}`} label="Font" launcher labelClass={lab}>
          <div className="flex items-center pl-[6px] pt-[12px] text-[11.5px]">
            <div className="flex h-[19px] w-[105px] items-center justify-between border-r border-[#ddd] bg-white px-[2px]">Calibri<Chev className="scale-75" /></div>
            <div className="flex h-[19px] w-[44px] items-center justify-between bg-white px-[2px]">11<Chev className="scale-75" /></div>
            <span className="ml-[5px] text-[13px] leading-none">A<sup className="text-[7px]">^</sup></span>
            <span className="ml-[8px] text-[13px] leading-none">A<sup className="text-[7px] text-[#2b7cd3]">v</sup></span>
          </div>
          <div className="flex items-center pl-[12px] pt-[7px]">
            <span className="w-[9px] text-center text-[12px] font-bold">B</span>
            <span className="ml-[12px] w-[9px] text-center text-[12px] italic">I</span>
            <span className="ml-[12px] w-[9px] text-center text-[12px] underline">U</span>
            <Chev className="ml-[3px] scale-75" />
            <BorderIco className="ml-[15px] h-[15px] w-[15px] text-[#999]" />
            <Chev className="ml-[2px] scale-75" />
            <FillIco bar="#5fd0e6" className="ml-[9px] h-[19px] w-[15px]" />
            <Chev className="ml-[1px] scale-75" />
            <FontColorIco bar="#000" className="ml-[6px] scale-[0.8]" />
            <Chev className="ml-[1px] scale-75" />
          </div>
        </Group>
        <Group className={`w-[247px] ${bd}`} label="Alignment" launcher labelClass={lab}>
          <div className="flex items-center pl-[9px] pt-[11px]">
            <VAlign pos={0} className="h-[12px] w-[14px]" />
            <VAlign pos={1} className="ml-[8px] h-[12px] w-[14px]" />
            <span className="ml-[4px] flex h-[19px] w-[21px] items-center justify-center bg-[#d6d6d6]"><VAlign pos={2} className="h-[12px] w-[14px]" /></span>
            <Orient accent="#2b7cd3" className="ml-[6px] h-[18px] w-[16px]" />
            <Chev className="scale-75" />
            <div className="ml-[22px] flex items-center text-[10.5px]"><AB className="w-[14px] scale-75" /><span className="ml-[1px] whitespace-nowrap">Wrap Text</span></div>
          </div>
          <div className="flex items-center pl-[9px] pt-[7px]">
            <HAlign a="l" className="h-[14px] w-[14px]" />
            <HAlign a="c" className="ml-[8px] h-[14px] w-[14px]" />
            <HAlign a="r" className="ml-[7px] h-[14px] w-[14px]" />
            <Indent out accent="#2b7cd3" className="ml-[12px] h-[14px] w-[14px]" />
            <Indent accent="#2b7cd3" className="ml-[8px] h-[14px] w-[14px]" />
            <MergeIco accent="#2b7cd3" className="ml-[10px] h-[17px] w-[15px]" />
            <span className="ml-[3px] whitespace-nowrap text-[11px]">Merge &amp; Center</span>
            <Chev className="ml-[4px] scale-75" />
          </div>
        </Group>
        <Group className={`w-[138px] ${bd}`} label="Number" launcher labelClass={lab}>
          <div className="pl-[6px] pt-[12px]">
            <div className="flex h-[19px] w-[126px] items-center justify-between bg-white px-[2px] text-[11.5px]">Custom<Chev className="scale-75" /></div>
          </div>
          <div className="flex items-center pl-[10px] pt-[7px]">
            <span className="w-[12px] text-[15px] leading-none">$</span>
            <Chev className="ml-[2px] scale-75" />
            <span className="ml-[10px] text-[15px] leading-none">%</span>
            <span className="ml-[12px] text-[18px] font-bold leading-none">,</span>
            <DecPlaces up accent="#2b7cd3" className="ml-[8px] h-[18px] w-[17px] text-[8px] leading-[9px]" />
            <DecPlaces accent="#2b7cd3" className="ml-[4px] h-[18px] w-[17px] text-[8px] leading-[9px]" />
          </div>
        </Group>
        <Group className={`w-[186px] ${bd}`} label="Styles" labelClass={lab}>
          <div className="flex pl-[11px]">
            <LightBig className="w-[64px]" lines={["Conditional", "Formatting~"]} icon={<TableIco kind="cond" fill="#e8555f" w={27} h={22} className="text-[#777]" />} />
            <LightBig className="w-[64px]" lines={["Format as", "Table~"]} icon={<BrushOver color="#2b7cd3"><TableIco kind="tbl" fill="#7fb2e8" w={27} h={22} className="text-[#777]" /></BrushOver>} />
            <LightBig className="w-[40px]" lines={["Cell", "Styles~"]} icon={<BrushOver color="#2b7cd3"><TableIco kind="cell" fill="#7fb2e8" w={27} h={22} className="text-[#777]" /></BrushOver>} />
          </div>
        </Group>
        <Group className={`w-[134px] ${bd}`} label="Cells" labelClass={lab}>
          <div className="flex pl-[6px]">
            <LightBig className="w-[40px]" lines={["Insert"]} icon={<TableIco kind="ins" fill="#7fb2e8" mark="#2b7cd3" w={28} h={22} className="text-[#777]" />} />
            <LightBig className="w-[40px]" lines={["Delete"]} icon={<TableIco kind="del" fill="#7fb2e8" mark="#e8555f" w={28} h={22} className="text-[#777]" />} />
            <LightBig className="w-[40px]" lines={["Format"]} icon={<TableIco kind="fmt" fill="#7fb2e8" w={28} h={22} className="text-[#777]" />} />
          </div>
        </Group>
        <Group className={`w-[186px] ${bd}`} label="Editing" labelClass={lab}>
          <div className="flex">
            <div className="w-[92px] pl-[8px] pt-[2px] text-[11.5px]">
              <div className="flex h-[19px] items-center"><Sigma size={17} strokeWidth={1.3} /><span className="ml-[2px] whitespace-nowrap">AutoSum</span><Chev className="ml-[3px] scale-75" /></div>
              <div className="mt-[1px] flex h-[19px] items-center"><FillDown accent="#2b7cd3" className="h-[18px] w-[14px]" /><span className="ml-[3px]">Fill</span><Chev className="ml-[1px] scale-75" /></div>
              <div className="mt-[1px] flex h-[19px] items-center"><Eraser color="#b04fc4" className="h-[18px] w-[15px]" /><span className="ml-[2px]">Clear</span><Chev className="ml-[1px] scale-75" /></div>
            </div>
            <LightBig className="w-[40px]" lines={["Sort &", "Filter~"]} icon={<SortIco s="h-[20px] w-[15px]" accent="#2b7cd3" />} />
            <LightBig className="ml-[3px] w-[42px]" lines={["Find &", "Select~"]} icon={<Magnifier s={27} />} />
          </div>
        </Group>
        <Group className={`w-[51px] ${bd}`} label="Ideas" labelClass={lab}>
          <div className="flex flex-col items-center">
            <div className="flex h-[36px] items-center"><Zap size={26} strokeWidth={1.2} className="fill-[#3f8fe0] text-[#1f6fc0]" /></div>
            <span className="text-[11.5px]">Ideas</span>
          </div>
        </Group>
        <div className="flex flex-1 items-end justify-end pb-[1px] pr-[2px]"><ChevronUp size={15} strokeWidth={1.4} /></div>
      </div>
    </div>
  );
}

function RightFormula() {
  return (
    <div className="flex h-[42px] shrink-0 gap-[4px] bg-[#e6e6e6] pl-[5px] pr-[5px] pt-[11px]">
      <div className="flex h-[21px] w-[93px] items-center justify-between bg-white px-[3px] text-[11.5px] text-[#555]">I2<span className="border-x-[2px] border-t-[3px] border-x-transparent border-t-[#666]" /></div>
      <div className="flex h-[21px] w-[25px] items-center justify-center text-[#bbb]">⋮</div>
      <div className="flex h-[21px] w-[101px] items-center justify-between bg-white pl-[11px] pr-[12px] text-[#aaa]">
        <X size={14} strokeWidth={1.2} />
        <Check size={14} strokeWidth={1.2} />
        <span className="font-['Liberation_Serif',serif] text-[14px] italic text-[#777]">fx</span>
      </div>
      <div className="flex h-[21px] flex-1 items-center justify-between bg-white pl-[9px] pr-[4px] font-['Lato',sans-serif] text-[13px] text-[#333]">
        =IF(NOT(F2="Hourly"),3000,"")
        <Chev className="scale-75" />
      </div>
    </div>
  );
}

const rightCols = "grid-cols-[47px_95px_128px_110px_112px_519px_130px_206px]";
const rightStyle = ["pr-[12px] justify-end", "pl-[5px] justify-start", "pl-[12px] justify-start", "pr-[11px] justify-end", "pr-[14px] justify-end", "justify-center"];

function RightSheet() {
  const cell = "flex items-center whitespace-nowrap border-b border-r";
  return (
    <div className="relative flex h-[530px] shrink-0 overflow-hidden bg-[#e6e6e6] font-['Lato',sans-serif] text-[24.5px] text-[#1c1c1c]">
      <div className={`grid h-fit w-[1347px] shrink-0 auto-rows-[36.4px] ${rightCols}`}>
        <div className="flex h-[36px] items-end justify-end bg-[#e6e6e6] pb-[1px] pr-[1px]">
          <span className="block h-0 w-0 border-b-[28px] border-l-[29px] border-b-[#bdbdbd] border-l-transparent" />
        </div>
        {["E", "F", "G", "H", "I", "J", "K"].map((h) => (
          <div key={h} className={`flex h-[36px] items-center justify-center border-r border-[#c8c8c8] text-[23px] ${h === "I" ? "border-b-2 border-[#6f8a78] bg-[#c6c6c6] text-[#1f6b44]" : "bg-[#e6e6e6] text-[#333]"}`}>{h}</div>
        ))}

        <div className="flex h-[37px] items-center justify-center bg-[#eeeeee] text-[23px] text-[#333]">1</div>
        {["Years", "Status", "Benefits", "Salary", "Bonus", "Job Rating", ""].map((t, i) => (
          <div
            key={i}
            className={`flex h-[37px] items-center whitespace-nowrap border-r font-bold text-black ${
              i === 6 ? "border-b border-[#e8e8e8] bg-white" : "border-[#bde6bd] bg-[#ccffcc]"
            } ${i === 4 ? "border-b-2 border-b-[#6f9a80]" : ""} ${i === 0 ? "justify-end pr-[4px]" : i === 1 ? "pl-[5px]" : i === 2 ? "pl-[4px]" : i === 3 ? "justify-end pr-[11px]" : i === 4 ? "justify-end pr-[14px]" : "justify-center"}`}
          >
            {t}
          </div>
        ))}

        {rightRows.map((r, ri) => (
          <React.Fragment key={ri}>
            <div className="flex items-center justify-center border-b border-r border-[#c9c9c9] border-r-[#217346] bg-[#dcdcdc] text-[23px] text-[#217346]">{ri + 2}</div>
            {r.map((v, i) => (
              <div
                key={i}
                className={`${cell} ${i === 0 && v === "-" ? "justify-end pr-[36px]" : rightStyle[i]} ${
                  i === 4
                    ? ri === 0
                      ? "border-[#e8e8e8] border-r-[#217346] bg-white"
                      : "border-[#b4b4b4] border-r-[#7fa08c] bg-[#c4c4c4]"
                    : "border-[#e8e8e8] bg-white"
                }`}
              >
                {v}
              </div>
            ))}
            <div className={`${cell} border-[#e8e8e8] bg-white`} />
          </React.Fragment>
        ))}
      </div>
      <div className="flex flex-1 flex-col items-stretch pt-[5px]">
        <div className="flex h-[16px] shrink-0 items-center justify-center bg-white">
          <span className="border-x-[4px] border-b-[5px] border-x-transparent border-b-[#666]" />
        </div>
        <div className="h-[20px] shrink-0 border border-[#ccc] bg-white" />
        <div className="flex-1 bg-[#dcdcdc]" />
        <div className="flex h-[16px] shrink-0 items-center justify-center bg-white">
          <span className="border-x-[4px] border-t-[5px] border-x-transparent border-t-[#666]" />
        </div>
      </div>
      {/* fill handle style cursor trail */}
      <svg width="26" height="32" viewBox="0 0 26 32" className="absolute left-[736px] top-[36px]" stroke="#666" strokeWidth="0.8" fill="#fff">
        <path d="M3 1H6V3H8V6H6V8H3V6H1V3H3Z" />
        <path d="M6 6H9V8H11V11H9V13H6V11H4V8H6Z" />
        <path d="M9 11H12V13H14V16H12V18H9V16H7V13H9Z" />
        <path d="M18 20H22V23H25V27H22V30H18V27H15V23H18Z" />
      </svg>
      {/* caption over the video */}
      <div className="absolute left-[518px] top-[463px] flex h-[34px] w-[329px] items-center justify-center rounded-[2px] bg-[#333] font-['Lato',sans-serif] text-[17.5px] text-white">
        so that's a different construction as well.
      </div>
    </div>
  );
}

function RightTabs() {
  return (
    <div className="relative flex h-[21px] shrink-0 items-center bg-[#ececec] pl-[18px] font-['Lato',sans-serif] text-[13.5px] text-[#555]">
      <span className="text-[10px] text-[#bbb]">‹</span>
      <span className="ml-[16px] text-[10px] text-[#bbb]">›</span>
      <div className="ml-[29px] flex h-[20px] items-center">
        <span className="flex h-full w-[63px] items-center justify-center bg-[#00ff00] text-[#0a7a2a]">Simple IF</span>
        <span className="flex h-full w-[67px] items-center justify-center bg-[#66ffff] text-[#1f7a6a]">Nested IF</span>
        <span className="flex h-full w-[91px] items-center justify-center border-b-2 border-[#e8e8a0] bg-[#fbfbe6] font-bold text-[#217346]">Compound IF</span>
        <span className="flex h-full w-[81px] items-center justify-center bg-[#00ff00] text-[#0a7a2a]">IFS Function</span>
      </div>
      <span className="ml-[24px] flex h-[13px] w-[13px] items-center justify-center rounded-full border border-[#999] text-[#999]"><Plus size={9} /></span>
      {/* LinkedIn Learning mark over the sheet tabs */}
      <div className="absolute right-[21px] top-0 flex h-[23px] items-center">
        <span className="font-['Liberation_Sans',sans-serif] text-[21px] font-bold leading-none text-[#f6f6f6] [-webkit-text-stroke:0.6px_#a8a8a8]">Linked</span>
        <span className="ml-[1px] flex h-[23px] items-center rounded-[3px] border border-[#bbb] px-[3px] font-['Liberation_Sans',sans-serif] text-[21px] font-bold leading-none text-[#f6f6f6] [-webkit-text-stroke:0.6px_#a8a8a8]">in</span>
        <span className="ml-[3px] text-[14px] tracking-tight text-[#c4c4c4]">LEARNING</span>
      </div>
    </div>
  );
}

function RightStatus() {
  return (
    <div className="flex h-[19px] shrink-0 items-center justify-end bg-[#f3f3f3] pr-[5px] font-['Lato',sans-serif] text-[11px] text-[#777]">
      <div className="flex gap-[9px] whitespace-nowrap">
        <span>Average: 3,000</span>
        <span>Count: 741</span>
        <span>Numerical Count: 619</span>
        <span>Min: 3,000</span>
        <span>Max: 3,000</span>
        <span>Sum: 1,857,000</span>
      </div>
      <div className="ml-[13px] flex h-full w-[26px] items-center justify-center bg-[#d8d8d8]">
        <svg width="12" height="14" viewBox="0 0 12 14" stroke="#888" fill="none"><path d="M.5 .5H11.5V13.5H.5ZM4 .5V13.5M8 .5V13.5M.5 5H11.5M.5 9H11.5" /></svg>
      </div>
      <svg width="12" height="14" viewBox="0 0 12 14" stroke="#aaa" fill="none" className="ml-[6px]"><path d="M.5 .5H11.5V13.5H.5ZM3 3H9V11H3Z" /></svg>
      <svg width="12" height="14" viewBox="0 0 12 14" stroke="#aaa" fill="none" className="ml-[14px]"><path d="M.5 .5H11.5V13.5H.5ZM.5 8H11.5M6 .5V8" /></svg>
      <Minus size={10} strokeWidth={3} className="ml-[10px] text-[#666]" />
      <div className="relative ml-[2px] flex h-[1px] w-[91px] items-center bg-[#bbb]">
        <span className="absolute left-[46px] block h-[7px] w-px bg-[#999]" />
        <span className="absolute left-[57px] block h-[13px] w-[4px] bg-[#666]" />
      </div>
      <Plus size={10} strokeWidth={3} className="ml-[3px] text-[#666]" />
      <span className="ml-[6px]">190%</span>
    </div>
  );
}

function RightWindow() {
  return (
    <div className="flex h-[807px] min-w-0 flex-1 flex-col bg-black pt-[2px]">
      <RightTitle />
      <RightRibbon />
      <RightFormula />
      <RightSheet />
      <RightTabs />
      <RightStatus />
    </div>
  );
}

export default function App() {
  return (
    <div className="flex h-[1080px] w-[3286px] flex-col overflow-hidden bg-white font-['Open_Sans',sans-serif]">
      <div className="h-[273px] shrink-0 bg-white" />
      <div className="flex">
        <LeftWindow />
        <RightWindow />
      </div>
    </div>
  );
}
